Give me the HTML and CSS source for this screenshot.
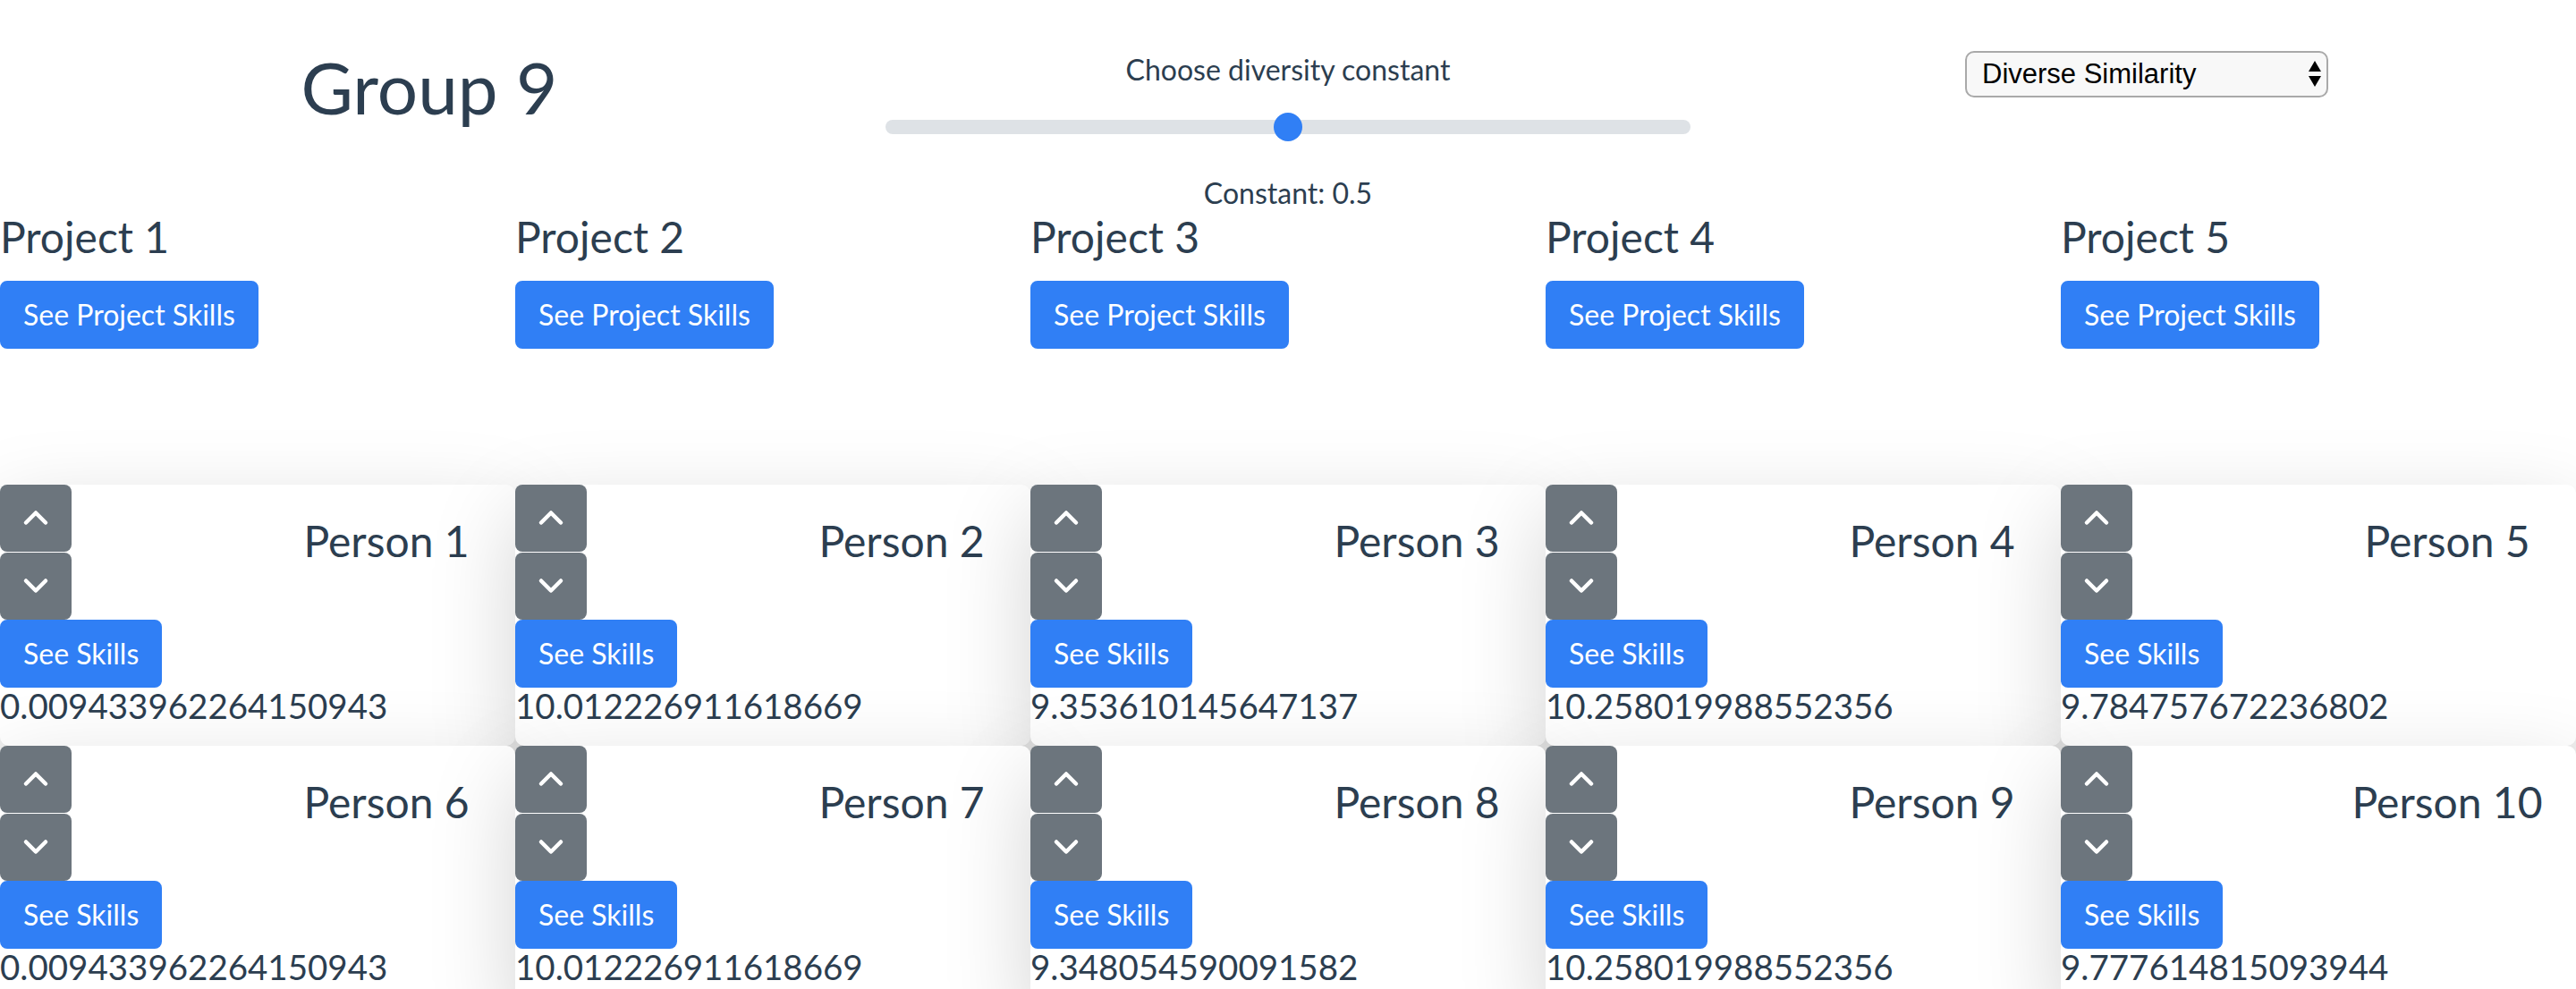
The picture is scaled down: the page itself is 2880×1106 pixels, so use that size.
FILE: index.html
```html
<!DOCTYPE html>
<html lang="en">
<head>
<meta charset="utf-8">
<title>Group 9</title>
<link rel="stylesheet" href="styles.css">
</head>
<body>
<div class="app">
  <header class="header">
    <div class="hcol">
      <h1 class="title">Group 9</h1>
    </div>
    <div class="hcol">
      <p class="label">Choose diversity constant</p>
      <div class="slider">
        <div class="track"></div>
        <div class="thumb"></div>
      </div>
      <p class="constant">Constant: 0.5</p>
    </div>
    <div class="hcol">
      <div class="select">
        <span class="select-text">Diverse Similarity</span>
        <svg class="select-arrows" width="14" height="30" viewBox="0 0 14 30"><path d="M0 12 L7 0 L14 12 Z M0 17 L14 17 L7 29 Z" fill="#000"/></svg>
      </div>
    </div>
  </header>

  <section class="projects">
    <div class="project"><h4 class="project-title">Project 1</h4><button class="btn btn-primary">See Project Skills</button></div>
    <div class="project"><h4 class="project-title">Project 2</h4><button class="btn btn-primary">See Project Skills</button></div>
    <div class="project"><h4 class="project-title">Project 3</h4><button class="btn btn-primary">See Project Skills</button></div>
    <div class="project"><h4 class="project-title">Project 4</h4><button class="btn btn-primary">See Project Skills</button></div>
    <div class="project"><h4 class="project-title">Project 5</h4><button class="btn btn-primary">See Project Skills</button></div>
  </section>

  <section class="people">
    <div class="card">
      <div class="card-top">
        <div class="arrows">
          <button class="btn-arrow"><svg width="32" height="20" viewBox="0 0 32 20"><path d="M5 15.5 L16 4.5 L27 15.5" fill="none" stroke="#fff" stroke-width="4.5" stroke-linecap="round" stroke-linejoin="round"/></svg></button>
          <button class="btn-arrow"><svg width="32" height="20" viewBox="0 0 32 20"><path d="M5 4.5 L16 15.5 L27 4.5" fill="none" stroke="#fff" stroke-width="4.5" stroke-linecap="round" stroke-linejoin="round"/></svg></button>
        </div>
        <h4 class="name">Person 1</h4>
      </div>
      <button class="btn btn-primary">See Skills</button>
      <h5 class="score">0.009433962264150943</h5>
    </div>
    <div class="card">
      <div class="card-top">
        <div class="arrows">
          <button class="btn-arrow"><svg width="32" height="20" viewBox="0 0 32 20"><path d="M5 15.5 L16 4.5 L27 15.5" fill="none" stroke="#fff" stroke-width="4.5" stroke-linecap="round" stroke-linejoin="round"/></svg></button>
          <button class="btn-arrow"><svg width="32" height="20" viewBox="0 0 32 20"><path d="M5 4.5 L16 15.5 L27 4.5" fill="none" stroke="#fff" stroke-width="4.5" stroke-linecap="round" stroke-linejoin="round"/></svg></button>
        </div>
        <h4 class="name">Person 2</h4>
      </div>
      <button class="btn btn-primary">See Skills</button>
      <h5 class="score">10.012226911618669</h5>
    </div>
    <div class="card">
      <div class="card-top">
        <div class="arrows">
          <button class="btn-arrow"><svg width="32" height="20" viewBox="0 0 32 20"><path d="M5 15.5 L16 4.5 L27 15.5" fill="none" stroke="#fff" stroke-width="4.5" stroke-linecap="round" stroke-linejoin="round"/></svg></button>
          <button class="btn-arrow"><svg width="32" height="20" viewBox="0 0 32 20"><path d="M5 4.5 L16 15.5 L27 4.5" fill="none" stroke="#fff" stroke-width="4.5" stroke-linecap="round" stroke-linejoin="round"/></svg></button>
        </div>
        <h4 class="name">Person 3</h4>
      </div>
      <button class="btn btn-primary">See Skills</button>
      <h5 class="score">9.353610145647137</h5>
    </div>
    <div class="card">
      <div class="card-top">
        <div class="arrows">
          <button class="btn-arrow"><svg width="32" height="20" viewBox="0 0 32 20"><path d="M5 15.5 L16 4.5 L27 15.5" fill="none" stroke="#fff" stroke-width="4.5" stroke-linecap="round" stroke-linejoin="round"/></svg></button>
          <button class="btn-arrow"><svg width="32" height="20" viewBox="0 0 32 20"><path d="M5 4.5 L16 15.5 L27 4.5" fill="none" stroke="#fff" stroke-width="4.5" stroke-linecap="round" stroke-linejoin="round"/></svg></button>
        </div>
        <h4 class="name">Person 4</h4>
      </div>
      <button class="btn btn-primary">See Skills</button>
      <h5 class="score">10.258019988552356</h5>
    </div>
    <div class="card">
      <div class="card-top">
        <div class="arrows">
          <button class="btn-arrow"><svg width="32" height="20" viewBox="0 0 32 20"><path d="M5 15.5 L16 4.5 L27 15.5" fill="none" stroke="#fff" stroke-width="4.5" stroke-linecap="round" stroke-linejoin="round"/></svg></button>
          <button class="btn-arrow"><svg width="32" height="20" viewBox="0 0 32 20"><path d="M5 4.5 L16 15.5 L27 4.5" fill="none" stroke="#fff" stroke-width="4.5" stroke-linecap="round" stroke-linejoin="round"/></svg></button>
        </div>
        <h4 class="name">Person 5</h4>
      </div>
      <button class="btn btn-primary">See Skills</button>
      <h5 class="score">9.784757672236802</h5>
    </div>
    <div class="card">
      <div class="card-top">
        <div class="arrows">
          <button class="btn-arrow"><svg width="32" height="20" viewBox="0 0 32 20"><path d="M5 15.5 L16 4.5 L27 15.5" fill="none" stroke="#fff" stroke-width="4.5" stroke-linecap="round" stroke-linejoin="round"/></svg></button>
          <button class="btn-arrow"><svg width="32" height="20" viewBox="0 0 32 20"><path d="M5 4.5 L16 15.5 L27 4.5" fill="none" stroke="#fff" stroke-width="4.5" stroke-linecap="round" stroke-linejoin="round"/></svg></button>
        </div>
        <h4 class="name">Person 6</h4>
      </div>
      <button class="btn btn-primary">See Skills</button>
      <h5 class="score">0.009433962264150943</h5>
    </div>
    <div class="card">
      <div class="card-top">
        <div class="arrows">
          <button class="btn-arrow"><svg width="32" height="20" viewBox="0 0 32 20"><path d="M5 15.5 L16 4.5 L27 15.5" fill="none" stroke="#fff" stroke-width="4.5" stroke-linecap="round" stroke-linejoin="round"/></svg></button>
          <button class="btn-arrow"><svg width="32" height="20" viewBox="0 0 32 20"><path d="M5 4.5 L16 15.5 L27 4.5" fill="none" stroke="#fff" stroke-width="4.5" stroke-linecap="round" stroke-linejoin="round"/></svg></button>
        </div>
        <h4 class="name">Person 7</h4>
      </div>
      <button class="btn btn-primary">See Skills</button>
      <h5 class="score">10.012226911618669</h5>
    </div>
    <div class="card">
      <div class="card-top">
        <div class="arrows">
          <button class="btn-arrow"><svg width="32" height="20" viewBox="0 0 32 20"><path d="M5 15.5 L16 4.5 L27 15.5" fill="none" stroke="#fff" stroke-width="4.5" stroke-linecap="round" stroke-linejoin="round"/></svg></button>
          <button class="btn-arrow"><svg width="32" height="20" viewBox="0 0 32 20"><path d="M5 4.5 L16 15.5 L27 4.5" fill="none" stroke="#fff" stroke-width="4.5" stroke-linecap="round" stroke-linejoin="round"/></svg></button>
        </div>
        <h4 class="name">Person 8</h4>
      </div>
      <button class="btn btn-primary">See Skills</button>
      <h5 class="score">9.348054590091582</h5>
    </div>
    <div class="card">
      <div class="card-top">
        <div class="arrows">
          <button class="btn-arrow"><svg width="32" height="20" viewBox="0 0 32 20"><path d="M5 15.5 L16 4.5 L27 15.5" fill="none" stroke="#fff" stroke-width="4.5" stroke-linecap="round" stroke-linejoin="round"/></svg></button>
          <button class="btn-arrow"><svg width="32" height="20" viewBox="0 0 32 20"><path d="M5 4.5 L16 15.5 L27 4.5" fill="none" stroke="#fff" stroke-width="4.5" stroke-linecap="round" stroke-linejoin="round"/></svg></button>
        </div>
        <h4 class="name">Person 9</h4>
      </div>
      <button class="btn btn-primary">See Skills</button>
      <h5 class="score">10.258019988552356</h5>
    </div>
    <div class="card">
      <div class="card-top">
        <div class="arrows">
          <button class="btn-arrow"><svg width="32" height="20" viewBox="0 0 32 20"><path d="M5 15.5 L16 4.5 L27 15.5" fill="none" stroke="#fff" stroke-width="4.5" stroke-linecap="round" stroke-linejoin="round"/></svg></button>
          <button class="btn-arrow"><svg width="32" height="20" viewBox="0 0 32 20"><path d="M5 4.5 L16 15.5 L27 4.5" fill="none" stroke="#fff" stroke-width="4.5" stroke-linecap="round" stroke-linejoin="round"/></svg></button>
        </div>
        <h4 class="name">Person 10</h4>
      </div>
      <button class="btn btn-primary">See Skills</button>
      <h5 class="score">9.777614815093944</h5>
    </div>
  </section>
</div>
</body>
</html>
```

FILE: styles.css
```css
* { box-sizing: border-box; }

html, body {
  margin: 0;
  padding: 0;
  background: #fff;
}

body {
  font-family: Lato, "Open Sans", sans-serif;
  font-size: 32px;
  color: #2c3e50;
  overflow: hidden;
}

.app {
  width: 2880px;
  height: 1106px;
  overflow: hidden;
}

/* ---------- header ---------- */
.header {
  display: flex;
  align-items: flex-start;
}

.hcol {
  flex: 1 1 0;
  padding: 0 30px;
  text-align: center;
}

.title {
  margin: 49px 0 0;
  font-size: 80px;
  font-weight: 400;
  line-height: 1.2;
}

.label {
  margin: 54px 0 0;
  font-size: 32px;
  line-height: 48px;
}

.slider {
  position: relative;
  height: 32px;
  margin-top: 24px;
  display: flex;
  align-items: center;
}

.track {
  flex: 1 1 auto;
  height: 16px;
  border-radius: 8px;
  background: #dee2e6;
}

.thumb {
  position: absolute;
  top: 0;
  left: calc(50% - 16px);
  width: 32px;
  height: 32px;
  border-radius: 50%;
  background: #307ff5;
}

.constant {
  margin: 38px 0 0;
  font-size: 32px;
  line-height: 40px;
}

.select {
  width: 406px;
  height: 52px;
  margin: 57px auto 0;
  border: 2px solid #a9a9a9;
  border-radius: 10px;
  background: #f8f8f8;
  display: flex;
  align-items: center;
  justify-content: space-between;
  padding: 0 6px 0 17px;
  font-family: "Liberation Sans", Arial, sans-serif;
  font-size: 31px;
  color: #000;
  text-align: left;
}

.select-arrows { display: block; }

/* ---------- buttons ---------- */
.btn {
  display: inline-block;
  font-family: Lato, "Open Sans", sans-serif;
  font-size: 32px;
  font-weight: 400;
  line-height: 48px;
  padding: 12px 24px;
  border: 2px solid transparent;
  border-radius: 8px;
  cursor: pointer;
}

.btn-primary {
  color: #fff;
  background: #307ff5;
  border-color: #307ff5;
}

/* ---------- projects ---------- */
.projects {
  display: grid;
  grid-template-columns: repeat(5, 1fr);
}

.project-title {
  margin: 0 0 20px;
  font-size: 48px;
  font-weight: 400;
  line-height: 1.2;
}

/* ---------- people ---------- */
.people {
  display: grid;
  grid-template-columns: repeat(5, 1fr);
  margin-top: 152px;
}

.card {
  height: 292px;
  background: #fff;
  border-radius: 10px;
  box-shadow: 0 32px 96px rgba(0, 0, 0, 0.175);
}

.card-top {
  display: flex;
}

.arrows {
  width: 50%;
  display: flex;
  flex-direction: column;
  align-items: flex-start;
}

.btn-arrow {
  width: 80px;
  height: 75px;
  padding: 0;
  border: none;
  border-radius: 8px;
  background: #6c757d;
  display: flex;
  align-items: center;
  justify-content: center;
  cursor: pointer;
}

.btn-arrow + .btn-arrow { margin-top: 1px; }

.name {
  width: 50%;
  margin: 34px 0 0;
  text-align: center;
  font-size: 48px;
  font-weight: 400;
  line-height: 1.2;
}

.card .btn { display: block; }

.score {
  margin: 0;
  font-size: 38.5px;
  font-weight: 400;
  line-height: 40px;
}
```
